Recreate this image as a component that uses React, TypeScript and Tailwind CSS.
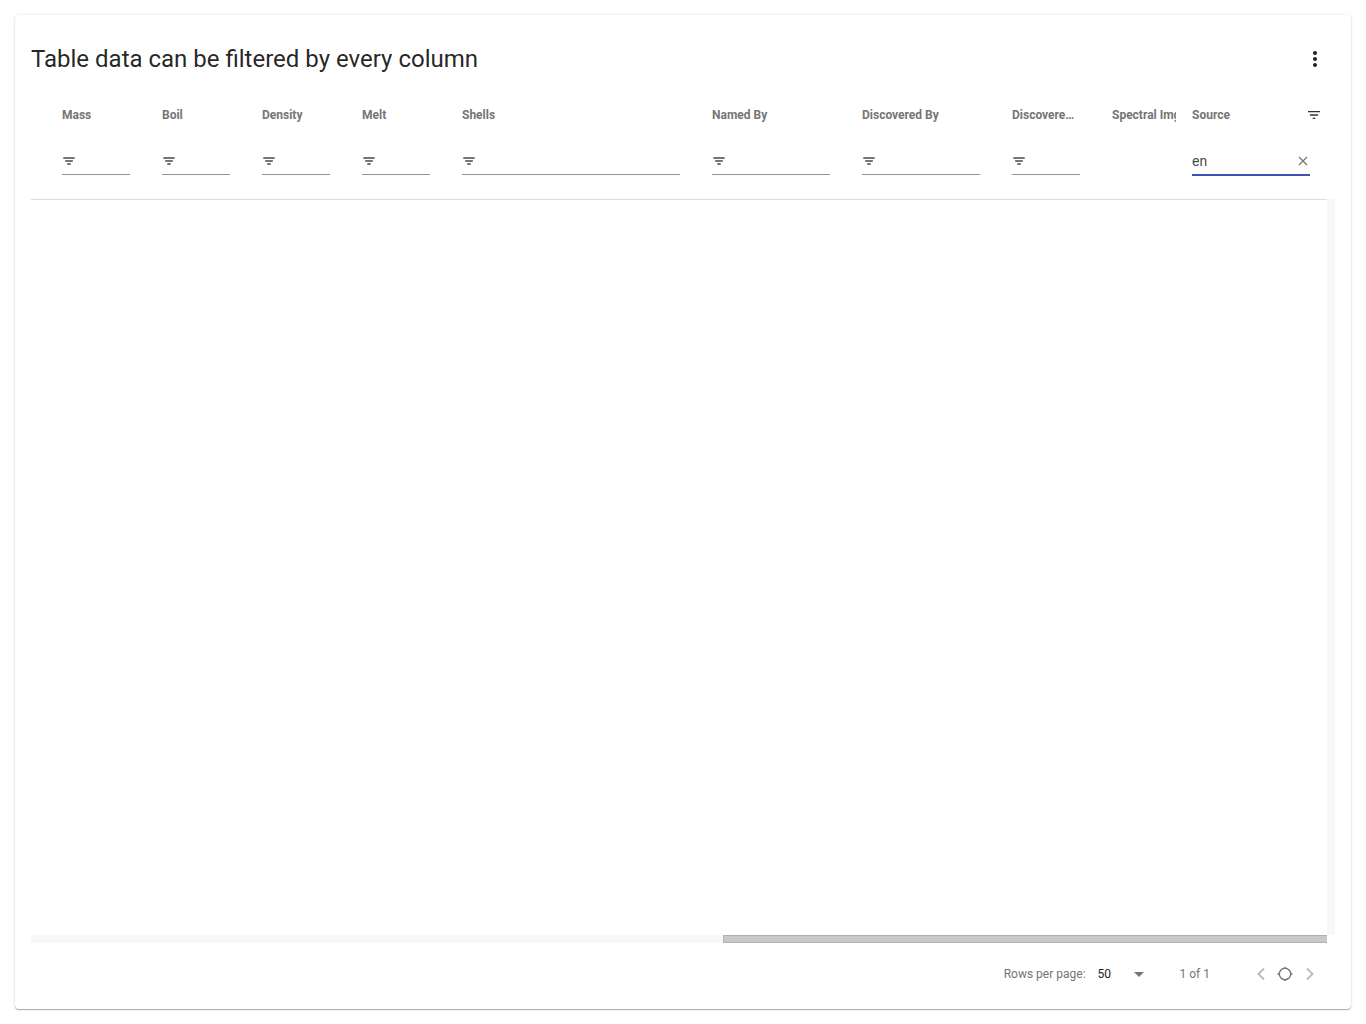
import { useState } from "react";

type Column = { id: string; label: string; width: string; filter: boolean; value?: string };

const columns: Column[] = [
  { id: "mass", label: "Mass", width: "w-[100px]", filter: true },
  { id: "boil", label: "Boil", width: "w-[100px]", filter: true },
  { id: "density", label: "Density", width: "w-[100px]", filter: true },
  { id: "melt", label: "Melt", width: "w-[100px]", filter: true },
  { id: "shells", label: "Shells", width: "", filter: true },
  { id: "named", label: "Named By", width: "w-[150px]", filter: true },
  { id: "discovered", label: "Discovered By", width: "w-[150px]", filter: true },
  { id: "discoveredIn", label: "Discovered In", width: "w-[100px]", filter: true },
  { id: "spectral", label: "Spectral Img", width: "w-[80px]", filter: false },
  { id: "source", label: "Source", width: "w-[151px]", filter: true, value: "en" },
];

function FilterGlyph() {
  return (
    <svg width="14" height="8" viewBox="0 0 14 8" className="pointer-events-none absolute left-0 top-[7px]" aria-hidden="true">
      <path d="M1.300 0h11.400v2H1.300zM3.200 3h7.600v2H3.200zM5.300 6h3.400v2H5.300z" fill="#757575" />
    </svg>
  );
}

function FilterField({ column }: { column: Column }) {
  const [value, setValue] = useState(column.value ?? "");
  const active = column.value !== undefined;
  return (
    <div className={active ? "relative h-[26px] border-b-2 border-[#3f51b5]" : "relative h-[25px] border-b border-[#949494]"}>
      {value === "" && <FilterGlyph />}
      <input
        aria-label={`Filter ${column.label}`}
        value={value}
        onChange={(e) => setValue(e.target.value)}
        className="block h-[22px] w-full bg-transparent pr-5 text-sm text-[#4a4a4a] outline-none"
      />
      {value !== "" && (
        <button type="button" aria-label="Clear filter" onClick={() => setValue("")} className="absolute right-0 top-1 flex size-[14px] items-center justify-center text-[#757575]">
          <svg width="14" height="14" viewBox="0 0 14 14" aria-hidden="true">
            <path d="M3 3l8 8M11 3l-8 8" stroke="currentColor" strokeWidth="1.2" />
          </svg>
        </button>
      )}
    </div>
  );
}

export default function App() {
  const [rows, setRows] = useState("50");
  return (
    <main className="flex min-h-screen flex-col bg-white p-[15px] font-['Roboto',sans-serif]">
      <section className="flex flex-1 flex-col rounded bg-white px-4 shadow-[0_1px_1px_0_rgba(0,0,0,0.3),0_0_3px_0_rgba(0,0,0,0.12)]">
        <header className="flex h-[88px] items-center justify-between">
          <h1 className="text-2xl text-black/87">Table data can be filtered by every column</h1>
          <button type="button" aria-label="More options" className="mr-2 flex size-6 items-center justify-center text-[#212121]">
            <svg width="24" height="24" viewBox="0 0 24 24" fill="currentColor" aria-hidden="true">
              <path d="M12 8c1.1 0 2-.9 2-2s-.9-2-2-2-2 .9-2 2 .9 2 2 2zm0 2c-1.1 0-2 .9-2 2s.9 2 2 2 2-.9 2-2-.9-2-2-2zm0 6c-1.1 0-2 .9-2 2s.9 2 2 2 2-.9 2-2-.9-2-2-2z" />
            </svg>
          </button>
        </header>

        <div className="mr-2 border-b border-[#dcdcdc]">
          <table className="w-full table-fixed text-left">
            <colgroup>
              <col className="w-[15px]" />
              {columns.map((c) => (
                <col key={c.id} className={c.width} />
              ))}
            </colgroup>
            <thead>
              <tr className="h-6">
                <td />
                {columns.map((c) => (
                  <th key={c.id} scope="col" className={c.filter ? "pl-4 pr-4 text-xs font-bold text-[#757575]" : "pl-4 text-xs font-bold text-[#757575]"}>
                    {c.id === "source" ? (
                      <div className="-mr-3 flex items-center justify-between">
                        <span>{c.label}</span>
                        <button type="button" aria-label="Toggle filters" className="mr-[1px] text-[#333333]">
                          <svg width="16" height="16" viewBox="0 0 24 24" fill="currentColor" aria-hidden="true">
                            <path d="M10 18h4v-2h-4v2zM3 6v2h18V6H3zm3 7h12v-2H6v2z" />
                          </svg>
                        </button>
                      </div>
                    ) : (
                      <div className={c.filter ? "truncate" : "overflow-hidden whitespace-nowrap"}>{c.label}</div>
                    )}
                  </th>
                ))}
              </tr>
              <tr className="h-[72px]">
                <td />
                {columns.map((c) => (
                  <td key={c.id} className={c.value ? "pb-0 pl-4 pr-[17px] pt-[23px] align-top" : "px-4 pb-0 pt-[23px] align-top"}>
                    {c.filter && <FilterField column={c} />}
                  </td>
                ))}
              </tr>
            </thead>
          </table>
        </div>

        <div className="flex flex-1">
          <div className="flex-1" />
          <div className="-mt-px w-2 bg-[#f8f8f8]" />
        </div>
        <div className="mr-2 flex h-2 justify-end bg-[#f8f8f8]">
          <div className="w-[46.6%] border border-r-0 border-[#b0b0b0] bg-[#c8c8c8]" />
        </div>

        <footer className="flex h-[66px] items-center justify-end pb-1 pr-4 text-xs text-[#757575]">
          <label htmlFor="rows" className="mr-3">Rows per page:</label>
          <div className="relative mr-9 flex items-center">
            <select id="rows" value={rows} onChange={(e) => setRows(e.target.value)} className="w-[46px] appearance-none bg-transparent text-xs text-[#212121] outline-none">
              <option>50</option>
              <option>100</option>
            </select>
            <svg width="10" height="5" viewBox="0 0 10 5" className="pointer-events-none absolute right-0" aria-hidden="true">
              <path d="M0 0h10L5 5z" fill="#757575" />
            </svg>
          </div>
          <span className="mr-[42px]">1 of 1</span>
          <button type="button" aria-label="Previous page" disabled className="text-[#bdbdbd]">
            <svg width="18" height="18" viewBox="0 0 18 18" fill="none" stroke="currentColor" strokeWidth="2" aria-hidden="true">
              <path d="M12 3.500L6.500 9l5.500 5.500" />
            </svg>
          </button>
          <button type="button" aria-label="Current page" className="ml-[7px] mr-2 text-[#757575]">
            <svg width="16" height="16" viewBox="0 0 16 16" fill="none" stroke="currentColor" strokeWidth="1.4" aria-hidden="true">
              <circle cx="8" cy="8" r="5.700" />
              <path d="M.5 8h2M13.500 8h2M8 1v1.500M8 13.500V15" />
            </svg>
          </button>
          <button type="button" aria-label="Next page" disabled className="text-[#bdbdbd]">
            <svg width="18" height="18" viewBox="0 0 18 18" fill="none" stroke="currentColor" strokeWidth="2" aria-hidden="true">
              <path d="M6 3.500L11.500 9 6 14.500" />
            </svg>
          </button>
        </footer>
      </section>
    </main>
  );
}
